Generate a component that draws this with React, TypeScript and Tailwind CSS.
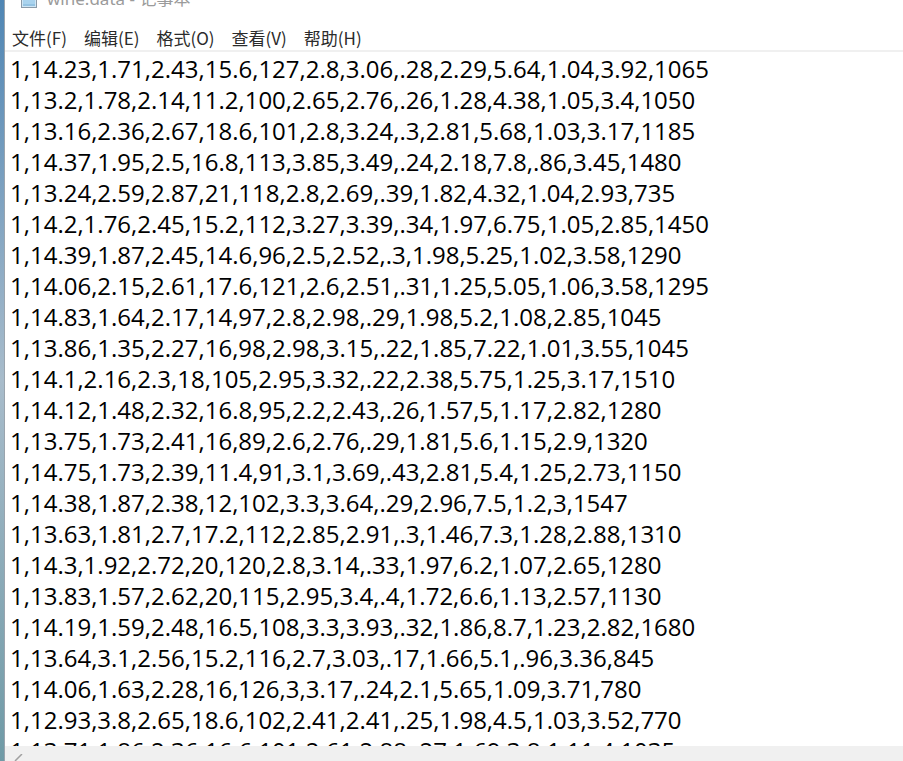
const rows = [
  "1,14.23,1.71,2.43,15.6,127,2.8,3.06,.28,2.29,5.64,1.04,3.92,1065",
  "1,13.2,1.78,2.14,11.2,100,2.65,2.76,.26,1.28,4.38,1.05,3.4,1050",
  "1,13.16,2.36,2.67,18.6,101,2.8,3.24,.3,2.81,5.68,1.03,3.17,1185",
  "1,14.37,1.95,2.5,16.8,113,3.85,3.49,.24,2.18,7.8,.86,3.45,1480",
  "1,13.24,2.59,2.87,21,118,2.8,2.69,.39,1.82,4.32,1.04,2.93,735",
  "1,14.2,1.76,2.45,15.2,112,3.27,3.39,.34,1.97,6.75,1.05,2.85,1450",
  "1,14.39,1.87,2.45,14.6,96,2.5,2.52,.3,1.98,5.25,1.02,3.58,1290",
  "1,14.06,2.15,2.61,17.6,121,2.6,2.51,.31,1.25,5.05,1.06,3.58,1295",
  "1,14.83,1.64,2.17,14,97,2.8,2.98,.29,1.98,5.2,1.08,2.85,1045",
  "1,13.86,1.35,2.27,16,98,2.98,3.15,.22,1.85,7.22,1.01,3.55,1045",
  "1,14.1,2.16,2.3,18,105,2.95,3.32,.22,2.38,5.75,1.25,3.17,1510",
  "1,14.12,1.48,2.32,16.8,95,2.2,2.43,.26,1.57,5,1.17,2.82,1280",
  "1,13.75,1.73,2.41,16,89,2.6,2.76,.29,1.81,5.6,1.15,2.9,1320",
  "1,14.75,1.73,2.39,11.4,91,3.1,3.69,.43,2.81,5.4,1.25,2.73,1150",
  "1,14.38,1.87,2.38,12,102,3.3,3.64,.29,2.96,7.5,1.2,3,1547",
  "1,13.63,1.81,2.7,17.2,112,2.85,2.91,.3,1.46,7.3,1.28,2.88,1310",
  "1,14.3,1.92,2.72,20,120,2.8,3.14,.33,1.97,6.2,1.07,2.65,1280",
  "1,13.83,1.57,2.62,20,115,2.95,3.4,.4,1.72,6.6,1.13,2.57,1130",
  "1,14.19,1.59,2.48,16.5,108,3.3,3.93,.32,1.86,8.7,1.23,2.82,1680",
  "1,13.64,3.1,2.56,15.2,116,2.7,3.03,.17,1.66,5.1,.96,3.36,845",
  "1,14.06,1.63,2.28,16,126,3,3.17,.24,2.1,5.65,1.09,3.71,780",
  "1,12.93,3.8,2.65,18.6,102,2.41,2.41,.25,1.98,4.5,1.03,3.52,770",
  "1,13.71,1.86,2.36,16.6,101,2.61,2.88,.27,1.69,3.8,1.11,4,1035",
];

const menus = ["文件(F)", "编辑(E)", "格式(O)", "查看(V)", "帮助(H)"];

function NotepadIcon() {
  return (
    <svg width="18" height="20" viewBox="0 0 18 20" className="shrink-0">
      <rect x="1.5" y="1.5" width="15" height="17" fill="#cfe6f5" stroke="#8a9aa8" />
      <rect x="3" y="3" width="12" height="14" fill="#a9d3ee" />
      <line x1="3" y1="16" x2="15" y2="16" stroke="#7fb4d8" />
    </svg>
  );
}

export default function App() {
  return (
    <div className="flex h-[761px] w-[903px] overflow-hidden bg-white">
      {/* desktop behind the window */}
      <div className="w-[4px] shrink-0 bg-gradient-to-b from-[#4f86b4] via-[#a8bccb] to-[#6f9aa6]" />

      <div className="flex min-w-0 flex-1 flex-col border-l border-[#9aa4ad] bg-white">
        {/* title bar, scrolled off the top */}
        <div className="h-[26px] shrink-0 overflow-hidden">
          <div className="-mt-[11px] flex items-center gap-[9px] pl-[15px]">
            <NotepadIcon />
            <span className="text-[17px] leading-[20px] text-[#9b9b9b] [font-family:'Noto_Sans','Noto_Sans_CJK_SC',sans-serif]">
              wine.data - 记事本
            </span>
          </div>
        </div>

        {/* menu bar */}
        <div className="flex h-[24px] shrink-0 items-center gap-[17px] pl-[7px] text-[17px] text-[#2b2b2b] [font-family:'Noto_Sans_CJK_SC',sans-serif]">
          {menus.map((m) => (
            <span key={m} className="leading-[24px]">
              {m}
            </span>
          ))}
        </div>

        <div className="h-[2px] shrink-0 bg-[#f0f0f0]" />

        {/* editor */}
        <div className="min-h-0 flex-1 overflow-hidden pl-[5px] pt-[1px] text-[24px] leading-[31px] text-black [font-family:'Open_Sans',sans-serif]">
          {rows.map((r, i) => (
            <div key={i} className="whitespace-pre">
              {r}
            </div>
          ))}
        </div>

        {/* horizontal scrollbar */}
        <div className="flex h-[15px] shrink-0 items-end bg-[#f0f0f0] pl-[9px]">
          <svg width="10" height="7" viewBox="0 0 10 7">
            <path d="M1 7 L8 0" stroke="#a0a0a0" strokeWidth="1.5" fill="none" />
          </svg>
        </div>
      </div>
    </div>
  );
}
